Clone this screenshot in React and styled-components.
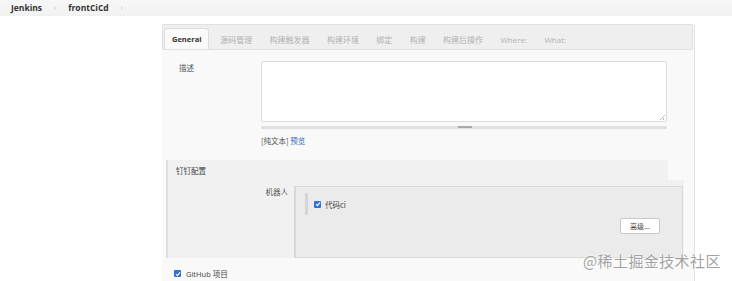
import React from "react";
import styled, { createGlobalStyle } from "styled-components";

const Global = createGlobalStyle`
  html, body { margin: 0; padding: 0; background: #fff; }
  body {
    font-family: "Open Sans", "Noto Sans CJK SC", sans-serif;
    font-size: 8px;
    color: #333;
    width: 732px;
    height: 281px;
    overflow: hidden;
    position: relative;
  }
`;

const TopBar = styled.div`
  height: 16px;
  background: linear-gradient(#f7f7f7, #f2f2f2);
  border-bottom: 1px solid #f0f0f0;
  display: flex;
  align-items: center;
  padding-left: 11px;
  box-sizing: border-box;
`;

const Crumb = styled.span`
  font-weight: 700;
  font-size: 8.5px;
  color: #333;
`;

const Chevron = styled.span`
  color: #bbb;
  font-size: 7px;
  margin: 0 ${(p) => p.$gap}px;
`;

const Main = styled.div`
  padding: 8px 0 0 162px;
`;

const Panel = styled.div`
  width: 533px;
  background: #f9f9f9;
  border-right: 1px solid #e2e2e2;
  box-sizing: border-box;
  height: 257px;
`;

const TabBar = styled.div`
  height: 26px;
  background: #efefef;
  border: 1px solid #e0e0e0;
  border-radius: 2px;
  box-sizing: border-box;
  display: flex;
  align-items: flex-end;
  padding-left: 1px;
  width: 531px;
`;

const Tab = styled.div`
  height: 21px;
  display: flex;
  align-items: center;
  padding: 0 ${(p) => (p.$active ? 7 : 7.7)}px;
  margin-right: ${(p) => (p.$active ? 2 : 0)}px;
  font-size: ${(p) => (p.$active ? 7.5 : 8)}px;
  font-family: "Open Sans", "Noto Sans CJK SC", sans-serif;
  color: ${(p) => (p.$active ? "#333" : "#b2b2b2")};
  font-weight: ${(p) => (p.$active ? 700 : 400)};
  background: ${(p) => (p.$active ? "#fafafa" : "transparent")};
  border: ${(p) => (p.$active ? "1px solid #ddd" : "1px solid transparent")};
  border-bottom: none;
  border-radius: 3px 3px 0 0;
  box-sizing: border-box;
`;

const DescRow = styled.div`
  display: flex;
  padding-top: 11px;
`;

const Label = styled.div`
  width: 82px;
  padding-left: 17px;
  padding-top: 1px;
  font-size: 7.5px;
  color: #555;
  font-family: "Noto Sans CJK SC", sans-serif;
`;

const Field = styled.div`
  display: flex;
  flex-direction: column;
`;

const TextArea = styled.div`
  width: 406px;
  height: 61px;
  background: #fff;
  border: 1px solid #dcdcdc;
  border-radius: 2px;
  box-sizing: border-box;
  position: relative;
  &::after {
    content: "";
    position: absolute;
    right: 1px;
    bottom: 1px;
    width: 5px;
    height: 5px;
    background: linear-gradient(135deg, transparent 45%, #bbb 45%, #bbb 55%, transparent 55%, transparent 70%, #bbb 70%, #bbb 80%, transparent 80%);
  }
`;

const Grip = styled.div`
  width: 406px;
  height: 3px;
  margin-top: 4px;
  background: #e0e0e0;
  border-radius: 1px;
  display: flex;
  justify-content: center;
  & > span {
    width: 14px;
    height: 2px;
    margin-left: 2px;
    background: #a9a9a9;
  }
`;

const Hint = styled.div`
  margin-top: 6px;
  font-size: 7.5px;
  color: #555;
  font-family: "Noto Sans CJK SC", sans-serif;
  & > a {
    color: #2d6cb5;
    text-decoration: none;
  }
`;

const Section = styled.div`
  margin: 14px 0 0 4px;
  border-left: 2px solid #dedede;
  width: 516px;
`;

const SectionHead = styled.div`
  width: 500px;
  height: 20px;
  background: #f1f1f1;
  display: flex;
  align-items: center;
  padding-left: 8px;
  box-sizing: border-box;
  font-size: 7.5px;
  color: #444;
  font-family: "Noto Sans CJK SC", sans-serif;
`;

const RobotRow = styled.div`
  display: flex;
  background: #f1f1f1;
  padding-top: 6px;
`;

const RobotLabel = styled.div`
  width: 120px;
  text-align: right;
  padding-right: 6px;
  font-size: 7.5px;
  color: #555;
  font-family: "Noto Sans CJK SC", sans-serif;
`;

const RobotBox = styled.div`
  width: 389px;
  height: 72px;
  background: #ebebeb;
  border: 1px solid #dadada;
  border-left: 2px solid #d8d8d8;
  box-sizing: border-box;
  display: flex;
  flex-direction: column;
  padding: 6px 22px 0 9px;
`;

const Item = styled.div`
  border-left: 3px solid #d6d6d6;
  height: 22px;
  display: flex;
  align-items: center;
  padding-left: 6px;
  gap: 4px;
  font-size: 7.5px;
  color: #444;
  font-family: "Noto Sans CJK SC", sans-serif;
`;

const Check = styled.span`
  width: 7px;
  height: 7px;
  background: #2f6fd6;
  border-radius: 1px;
  display: inline-flex;
  align-items: center;
  justify-content: center;
  flex: none;
`;

const ButtonRow = styled.div`
  display: flex;
  justify-content: flex-end;
  margin-top: 3px;
`;

const Button = styled.div`
  width: 40px;
  height: 16px;
  background: #fff;
  border: 1px solid #c8c8c8;
  border-radius: 2px;
  box-sizing: border-box;
  display: flex;
  align-items: center;
  justify-content: center;
  font-size: 7px;
  color: #444;
  font-family: "Noto Sans CJK SC", sans-serif;
`;

const GithubRow = styled.div`
  display: flex;
  align-items: center;
  gap: 5px;
  padding-left: 12px;
  margin-top: 10px;
  font-size: 7.5px;
  color: #444;
  font-family: "Open Sans", "Noto Sans CJK SC", sans-serif;
`;

const Watermark = styled.div`
  position: absolute;
  left: 583px;
  top: 250px;
  font-size: 15px;
  color: #a2a2a2;
  font-family: "Noto Sans CJK SC", sans-serif;
  letter-spacing: 0.4px;
  text-shadow: 0 0 2px #fff, 0 0 2px #fff;
  white-space: nowrap;
`;

const Tick = () => (
  <svg width="6" height="6" viewBox="0 0 6 6">
    <path d="M1 3.2 L2.5 4.6 L5 1.4" stroke="#fff" strokeWidth="1.1" fill="none" />
  </svg>
);

const tabs = ["源码管理", "构建触发器", "构建环境", "绑定", "构建", "构建后操作", "Where:", "What:"];

export default function App() {
  return (
    <>
      <Global />
      <TopBar>
        <Crumb>Jenkins</Crumb>
        <Chevron $gap={12}>›</Chevron>
        <Crumb>frontCiCd</Crumb>
        <Chevron $gap={12}>›</Chevron>
      </TopBar>
      <Main>
        <Panel>
          <TabBar>
            <Tab $active>General</Tab>
            {tabs.map((t) => (
              <Tab key={t}>{t}</Tab>
            ))}
          </TabBar>
          <DescRow>
            <Label>描述</Label>
            <Field>
              <TextArea />
              <Grip>
                <span />
              </Grip>
              <Hint>
                [纯文本] <a href="#">预览</a>
              </Hint>
            </Field>
          </DescRow>
          <Section>
            <SectionHead>钉钉配置</SectionHead>
            <RobotRow>
              <RobotLabel>机器人</RobotLabel>
              <RobotBox>
                <Item>
                  <Check>
                    <Tick />
                  </Check>
                  代码ci
                </Item>
                <ButtonRow>
                  <Button>高级...</Button>
                </ButtonRow>
              </RobotBox>
            </RobotRow>
          </Section>
          <GithubRow>
            <Check>
              <Tick />
            </Check>
            GitHub 项目
          </GithubRow>
        </Panel>
      </Main>
      <Watermark>@稀土掘金技术社区</Watermark>
    </>
  );
}
